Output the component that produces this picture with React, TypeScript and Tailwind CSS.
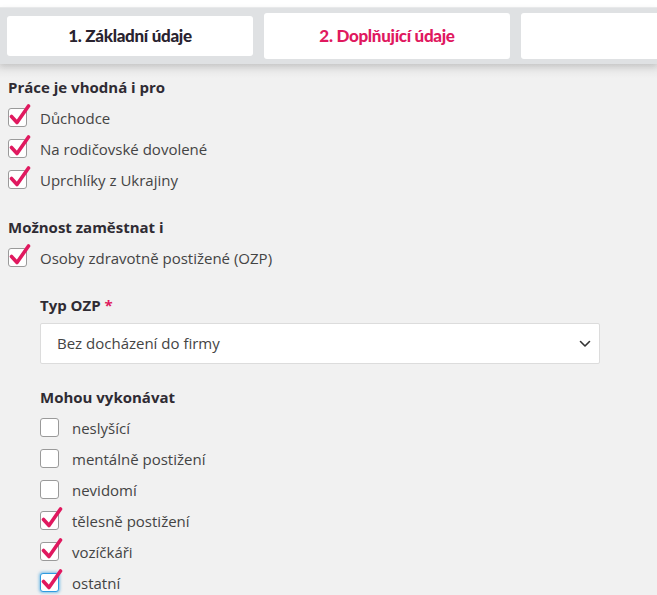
import React from 'react';

const Check = ({ checked, focus }: { checked: boolean; focus?: boolean }) => (
  <span className="relative inline-block w-[19px] h-[19px] shrink-0">
    <span
      className={
        'block w-[19px] h-[19px] rounded-[3px] bg-white border ' +
        (focus ? 'border-[#2f9be0] shadow-[0_0_3px_1px_rgba(47,155,224,0.6)]' : 'border-[#9a9a9a]')
      }
    />
    {checked && (
      <svg className="absolute left-[1px] top-[-5px] w-[22px] h-[23px]" viewBox="0 0 22 23" fill="none">
        <path d="M2.5 13.5 L8 19.5 L19.5 3" stroke="#e0195f" strokeWidth="3.6" strokeLinecap="round" strokeLinejoin="round" />
      </svg>
    )}
  </span>
);

const Row = ({ label, checked, focus }: { label: string; checked: boolean; focus?: boolean }) => (
  <div className="flex items-center gap-[13px] h-[31px] shrink-0">
    <Check checked={checked} focus={focus} />
    <span className="text-[15px] leading-[20px] text-[#444]">{label}</span>
  </div>
);

const tabFont = { fontFamily: 'Lato, sans-serif' };

export default function App() {
  return (
    <div className="w-[657px] h-[595px] overflow-hidden bg-[#f1f1f1]" style={{ fontFamily: '"Open Sans", sans-serif' }}>
      <div className="h-[7px] bg-white" />
      <div className="h-[57px] bg-[#dfe1e3] border-t border-[#e8e9ea] flex items-center gap-[11px] pl-[7px] shadow-[0_3px_6px_rgba(0,0,0,0.12)] relative">
        <div className="w-[246px] shrink-0 h-[40px] bg-white rounded-[3px] flex items-center justify-center text-[17px] tracking-[-0.3px] text-[#29232f] font-black" style={tabFont}>
          1. Základní údaje
        </div>
        <div className="w-[246px] shrink-0 h-[46px] bg-white rounded-[3px] flex items-center justify-center text-[17px] tracking-[-0.3px] text-[#e0195f] font-black" style={tabFont}>
          2. Doplňující údaje
        </div>
        <div className="w-[246px] shrink-0 h-[46px] bg-white rounded-[3px]" />
      </div>
      <div className="bg-gradient-to-b from-[#e2e2e2] to-[#f1f1f1] h-[14px]" />
      <div className="pl-[8px]">
        <div className="text-[15px] font-bold text-[#2f2b33] leading-[20px] mt-[-1px]">Práce je vhodná i pro</div>
        <div className="mt-[5px] flex flex-col">
          <Row label="Důchodce" checked />
          <Row label="Na rodičovské dovolené" checked />
          <Row label="Uprchlíky z Ukrajiny" checked />
        </div>
        <div className="text-[15px] font-bold text-[#2f2b33] leading-[20px] mt-[22px]">Možnost zaměstnat i</div>
        <div className="mt-[5px] flex flex-col">
          <Row label="Osoby zdravotně postižené (OZP)" checked />
        </div>
        <div className="pl-[32px] mt-[22px]">
          <div className="text-[15px] font-bold text-[#2f2b33] leading-[20px]">
            Typ OZP <span className="text-[#e0195f]">*</span>
          </div>
          <div className="mt-[8px] w-[560px] h-[41px] bg-white border border-[#dcdcdc] rounded-[2px] flex items-center justify-between pl-[16px] pr-[8px]">
            <span className="text-[15px] text-[#444]">Bez docházení do firmy</span>
            <svg width="12" height="8" viewBox="0 0 12 8" fill="none">
              <path d="M1.5 1.5 L6 6 L10.5 1.5" stroke="#333" strokeWidth="1.6" strokeLinecap="round" strokeLinejoin="round" />
            </svg>
          </div>
          <div className="text-[15px] font-bold text-[#2f2b33] leading-[20px] mt-[23px]">Mohou vykonávat</div>
          <div className="mt-[5px] flex flex-col">
            <Row label="neslyšící" checked={false} />
            <Row label="mentálně postižení" checked={false} />
            <Row label="nevidomí" checked={false} />
            <Row label="tělesně postižení" checked />
            <Row label="vozíčkáři" checked />
            <Row label="ostatní" checked focus />
          </div>
        </div>
      </div>
    </div>
  );
}
